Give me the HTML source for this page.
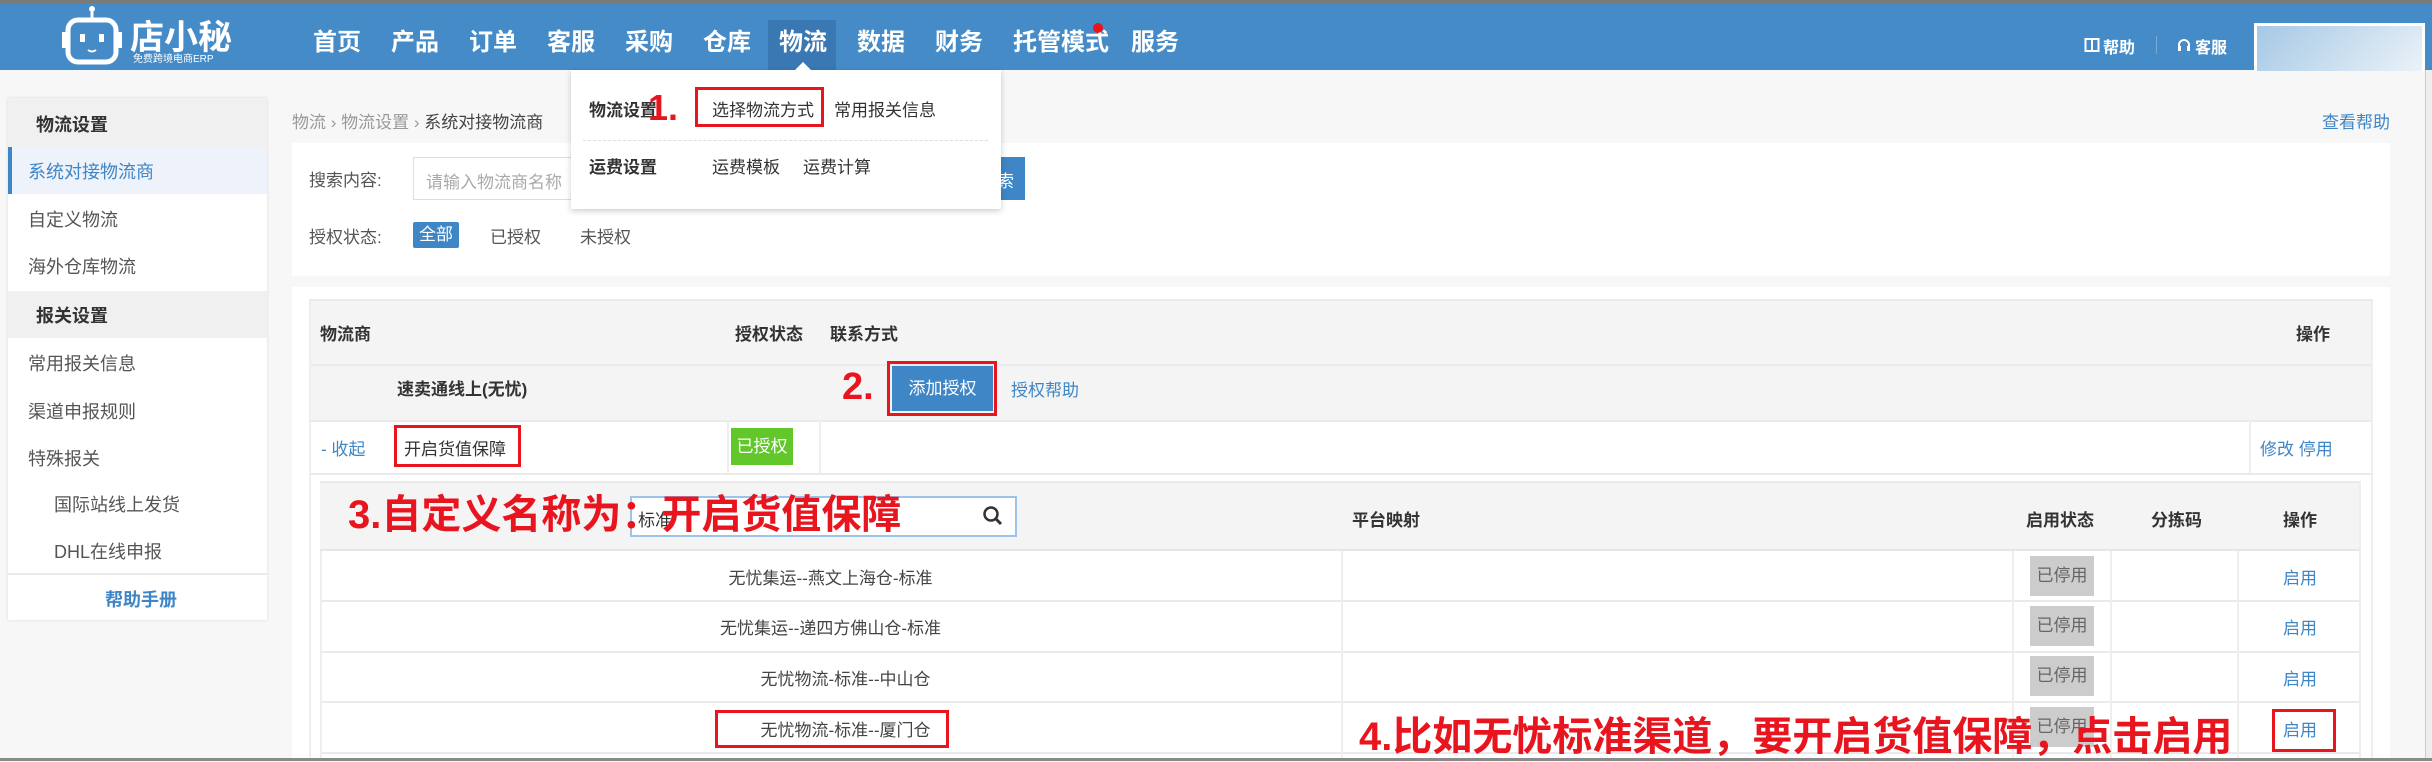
<!DOCTYPE html>
<html><head><meta charset="utf-8"><style>
*{margin:0;padding:0;box-sizing:border-box}
body{width:2432px;height:761px;overflow:hidden;background:#f7f7f7;font-family:"Liberation Sans","Noto Sans CJK SC",sans-serif;font-size:18px;color:#555;position:relative}
.a{position:absolute;white-space:nowrap}
.hd{left:0;top:0;width:2432px;height:70px;background:#458bc7;border-top:3px solid #7a7a7a}
.nav{top:22px;font-size:24px;color:#fff;font-weight:bold}
.red{color:#e8141e;font-weight:bold}
.rb{position:absolute;border:3px solid #e8141e}
.sb{left:8px;width:259px;background:#fff}
.si{left:28px;font-size:18px;color:#555}
.b{font-weight:bold;color:#333}
.lk{color:#3e86c6}
.hl{position:absolute;height:2px;background:#eaeaea}
.vl{position:absolute;width:2px;background:#eee}
.gray{position:absolute;background:#ccc;color:#666;font-size:17px;text-align:center;line-height:40px;width:64px;height:40px}
</style></head><body>
<div class="a hd"></div>
<svg class="a" style="left:62px;top:4px" width="60" height="64" viewBox="0 0 60 64"><circle cx="30" cy="5" r="3" fill="#fff"/><line x1="30" y1="8" x2="30" y2="16" stroke="#fff" stroke-width="3"/><rect x="6" y="16" width="48" height="42" rx="10" fill="none" stroke="#fff" stroke-width="5"/><rect x="0" y="28" width="5" height="16" fill="#fff"/><rect x="55" y="28" width="5" height="16" fill="#fff"/><rect x="18" y="30" width="5" height="8" fill="#fff"/><rect x="37" y="30" width="5" height="8" fill="#fff"/><path d="M26 46 q4 3 8 0" stroke="#fff" stroke-width="2" fill="none"/></svg>
<div class="a" style="left:130px;top:10px;font-size:34px;color:#fff;font-weight:bold">店小秘</div>
<div class="a" style="left:133px;top:50px;font-size:10px;color:#fff">免费跨境电商ERP</div>
<div class="a" style="left:768px;top:20px;width:68px;height:50px;background:#3a78b3"></div>
<div class="a nav" style="left:313px">首页</div>
<div class="a nav" style="left:391px">产品</div>
<div class="a nav" style="left:469px">订单</div>
<div class="a nav" style="left:547px">客服</div>
<div class="a nav" style="left:625px">采购</div>
<div class="a nav" style="left:703px">仓库</div>
<div class="a nav" style="left:779px">物流</div>
<div class="a nav" style="left:857px">数据</div>
<div class="a nav" style="left:935px">财务</div>
<div class="a nav" style="left:1013px">托管模式</div>
<div class="a" style="left:1093px;top:23px;width:10px;height:10px;border-radius:5px;background:#e8141e"></div>
<div class="a nav" style="left:1131px">服务</div>
<svg class="a" style="left:2084px;top:37px" width="16" height="16" viewBox="0 0 16 16"><rect x="1.5" y="2" width="13" height="12" fill="none" stroke="#fff" stroke-width="2"/><line x1="8" y1="2" x2="8" y2="14" stroke="#fff" stroke-width="2"/></svg>
<div class="a" style="left:2103px;top:34px;font-size:16px;color:#fff;font-weight:bold">帮助</div>
<div class="a" style="left:2156px;top:36px;width:1px;height:18px;background:#7aaad6"></div>
<svg class="a" style="left:2176px;top:37px" width="16" height="17" viewBox="0 0 16 17"><path d="M3 12 V8 a5 5 0 0 1 10 0 V12" fill="none" stroke="#fff" stroke-width="2"/><rect x="2" y="9" width="3" height="5" fill="#fff"/><rect x="11" y="9" width="3" height="5" fill="#fff"/></svg>
<div class="a" style="left:2195px;top:34px;font-size:16px;color:#fff;font-weight:bold">客服</div>
<div class="a" style="left:2254px;top:23px;width:171px;height:48px;border:3px solid #fff;border-bottom:none;background:linear-gradient(135deg,#a6c8e6,#eaf2f8)"></div>

<div class="a sb" style="top:98px;height:522px;box-shadow:0 0 3px #ddd"></div>
<div class="a" style="left:8px;top:98px;width:259px;height:49px;background:#f0f0f0"></div>
<div class="a si b" style="left:36px;top:111px">物流设置</div>
<div class="a" style="left:8px;top:147px;width:259px;height:47px;background:#eef2fb;border-left:4px solid #3e86c6"></div>
<div class="a si lk" style="top:158px">系统对接物流商</div>
<div class="a si" style="top:206px">自定义物流</div>
<div class="a si" style="top:253px">海外仓库物流</div>
<div class="a" style="left:8px;top:291px;width:259px;height:47px;background:#f0f0f0"></div>
<div class="a si b" style="left:36px;top:302px">报关设置</div>
<div class="a si" style="top:350px">常用报关信息</div>
<div class="a si" style="top:398px">渠道申报规则</div>
<div class="a si" style="top:445px">特殊报关</div>
<div class="a si" style="left:54px;top:491px">国际站线上发货</div>
<div class="a si" style="left:54px;top:538px">DHL在线申报</div>
<div class="hl" style="left:8px;top:573px;width:259px"></div>
<div class="a si lk b" style="left:105px;top:586px">帮助手册</div>

<div class="a" style="left:292px;top:108px;font-size:17px;color:#999">物流 › 物流设置 › <span style="color:#444">系统对接物流商</span></div>
<div class="a lk" style="left:2322px;top:108px;font-size:17px">查看帮助</div>

<div class="a" style="left:292px;top:143px;width:2098px;height:133px;background:#fff"></div>
<div class="a" style="left:309px;top:166px;font-size:17px">搜索内容:</div>
<div class="a" style="left:413px;top:157px;width:300px;height:43px;border:1px solid #ddd;font-size:17px;color:#aaa;padding:10px 12px">请输入物流商名称</div>
<div class="a" style="left:985px;top:157px;width:40px;height:43px;background:#3e86c6;color:#fff;font-size:17px;padding:10px 0 0 12px">索</div>
<div class="a" style="left:309px;top:223px;font-size:17px">授权状态:</div>
<div class="a" style="left:413px;top:222px;width:46px;height:26px;background:#3e86c6;color:#fff;font-size:17px;border-radius:2px;text-align:center;line-height:26px">全部</div>
<div class="a" style="left:490px;top:223px;font-size:17px">已授权</div>
<div class="a" style="left:580px;top:223px;font-size:17px">未授权</div>

<div class="a" style="left:571px;top:70px;width:430px;height:139px;background:#fff;box-shadow:0 2px 6px rgba(0,0,0,.2)"></div>
<div class="a" style="left:795px;top:62px;width:0;height:0;border:8px solid transparent;border-bottom-color:#fff;border-top:none"></div>
<div class="a b" style="left:589px;top:96px;font-size:17px">物流设置</div>
<div class="a red" style="left:648px;top:87px;font-size:36px">1.</div>
<div class="rb" style="left:695px;top:87px;width:129px;height:40px"></div>
<div class="a" style="left:712px;top:96px;font-size:17px;color:#333">选择物流方式</div>
<div class="a" style="left:834px;top:96px;font-size:17px;color:#333">常用报关信息</div>
<div class="a" style="left:583px;top:140px;width:405px;border-top:1px dashed #ddd"></div>
<div class="a b" style="left:589px;top:153px;font-size:17px">运费设置</div>
<div class="a" style="left:712px;top:153px;font-size:17px;color:#333">运费模板</div>
<div class="a" style="left:803px;top:153px;font-size:17px;color:#333">运费计算</div>

<div class="a" style="left:292px;top:287px;width:2098px;height:474px;background:#fff"></div>
<div class="a" style="left:309px;top:299px;width:2064px;height:121px;background:#f4f4f4;border-top:2px solid #eaeaea"></div>
<div class="hl" style="left:309px;top:364px;width:2064px"></div>
<div class="a b" style="left:320px;top:320px;font-size:17px">物流商</div>
<div class="a b" style="left:735px;top:320px;font-size:17px">授权状态</div>
<div class="a b" style="left:830px;top:320px;font-size:17px">联系方式</div>
<div class="a b" style="left:2296px;top:320px;font-size:17px">操作</div>
<div class="a b" style="left:397px;top:375px;font-size:17px">速卖通线上(无忧)</div>
<div class="a red" style="left:842px;top:366px;font-size:38px">2.</div>
<div class="rb" style="left:887px;top:361px;width:110px;height:55px"></div>
<div class="a" style="left:892px;top:366px;width:101px;height:45px;background:#3e86c6;color:#fff;font-size:17px;text-align:center;line-height:45px">添加授权</div>
<div class="a lk" style="left:1011px;top:376px;font-size:17px">授权帮助</div>
<div class="hl" style="left:309px;top:420px;width:2064px"></div>
<div class="a lk" style="left:321px;top:435px;font-size:17px">- 收起</div>
<div class="rb" style="left:394px;top:425px;width:127px;height:42px"></div>
<div class="a" style="left:404px;top:435px;font-size:17px;color:#333">开启货值保障</div>
<div class="vl" style="left:727px;top:420px;height:53px"></div>
<div class="a" style="left:731px;top:428px;width:62px;height:37px;background:#62c72a;color:#fff;font-size:17px;text-align:center;line-height:37px">已授权</div>
<div class="vl" style="left:819px;top:420px;height:53px"></div>
<div class="vl" style="left:2249px;top:420px;height:53px"></div>
<div class="a lk" style="left:2260px;top:435px;font-size:17px">修改 停用</div>
<div class="hl" style="left:309px;top:473px;width:2064px"></div>
<div class="vl" style="left:2371px;top:299px;height:462px"></div>
<div class="vl" style="left:309px;top:299px;height:462px"></div>

<div class="a" style="left:320px;top:481px;width:2040px;height:70px;background:#f4f4f4;border-top:2px solid #eaeaea;border-bottom:2px solid #e6e6e6"></div>
<div class="a" style="left:630px;top:496px;width:387px;height:41px;border:2px solid #9cc3ea;background:#fff;font-size:17px;color:#333;padding:8px 6px">标准</div>
<svg class="a" style="left:982px;top:505px" width="22" height="22" viewBox="0 0 22 22"><circle cx="9" cy="9" r="6.5" fill="none" stroke="#333" stroke-width="2.5"/><line x1="14" y1="14" x2="19" y2="19" stroke="#333" stroke-width="3"/></svg>
<div class="a red" style="left:348px;top:482px;font-size:40px">3.自定义名称为：开启货值保障</div>
<div class="a b" style="left:1352px;top:506px;font-size:17px">平台映射</div>
<div class="a b" style="left:2026px;top:506px;font-size:17px">启用状态</div>
<div class="a b" style="left:2151px;top:506px;font-size:17px">分拣码</div>
<div class="a b" style="left:2283px;top:506px;font-size:17px">操作</div>
<div class="hl" style="left:320px;top:600px;width:2040px"></div>
<div class="hl" style="left:320px;top:651px;width:2040px"></div>
<div class="hl" style="left:320px;top:701px;width:2040px"></div>
<div class="hl" style="left:320px;top:752px;width:2040px"></div>
<div class="vl" style="left:320px;top:551px;height:210px"></div>
<div class="vl" style="left:1341px;top:551px;height:210px"></div>
<div class="vl" style="left:2012px;top:551px;height:210px"></div>
<div class="vl" style="left:2110px;top:551px;height:210px"></div>
<div class="vl" style="left:2237px;top:551px;height:210px"></div>
<div class="vl" style="left:2359px;top:481px;height:280px"></div>
<div class="a" style="left:320px;top:564px;width:1021px;text-align:center;font-size:17px;color:#444">无忧集运--燕文上海仓-标准</div>
<div class="a" style="left:320px;top:614px;width:1021px;text-align:center;font-size:17px;color:#444">无忧集运--递四方佛山仓-标准</div>
<div class="a" style="left:320px;top:665px;width:1021px;text-align:center;font-size:17px;color:#444;padding-left:30px">无忧物流-标准--中山仓</div>
<div class="rb" style="left:715px;top:710px;width:234px;height:38px"></div>
<div class="a" style="left:320px;top:716px;width:1021px;text-align:center;font-size:17px;color:#444;padding-left:30px">无忧物流-标准--厦门仓</div>
<div class="gray" style="left:2030px;top:556px">已停用</div>
<div class="gray" style="left:2030px;top:606px">已停用</div>
<div class="gray" style="left:2030px;top:656px">已停用</div>
<div class="gray" style="left:2030px;top:707px">已停用</div>
<div class="a lk" style="left:2283px;top:564px;font-size:17px">启用</div>
<div class="a lk" style="left:2283px;top:614px;font-size:17px">启用</div>
<div class="a lk" style="left:2283px;top:665px;font-size:17px">启用</div>
<div class="a red" style="left:1359px;top:704px;font-size:40px">4.比如无忧标准渠道，要开启货值保障，点击启用</div>
<div class="rb" style="left:2272px;top:709px;width:64px;height:43px"></div>
<div class="a lk" style="left:2283px;top:716px;font-size:17px">启用</div>

<div class="a" style="left:2425px;top:70px;width:7px;height:691px;background:#eee;border-left:1px solid #ccc"></div>
<div class="a" style="left:0;top:758px;width:2432px;height:3px;background:#8a8a8a"></div>
</body></html>
